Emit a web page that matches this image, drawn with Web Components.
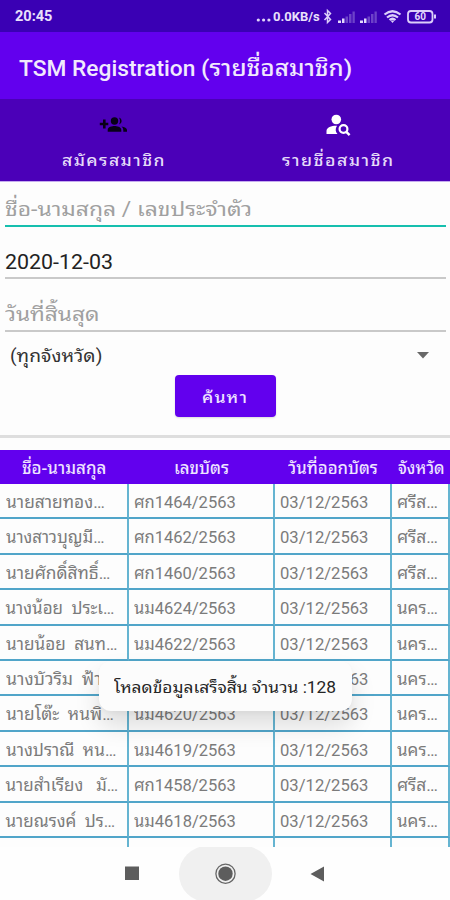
<!DOCTYPE html>
<html lang="th"><head><meta charset="utf-8"><title>TSM Registration</title>
<style>
html,body{margin:0;width:450px;height:900px;overflow:hidden;background:#fdfdfd}
body{font-family:Roboto,"Noto Sans Thai Looped","Noto Looped Thai","Droid Sans Thai",Loma,Waree,Garuda,"Noto Sans Thai","Noto Sans",sans-serif}
</style></head><body>
<reg-app></reg-app>
<script>
const define=(name,html,setup)=>customElements.define(name,class extends HTMLElement{
  connectedCallback(){
    if(this.shadowRoot)return;
    const t=document.createElement('template');
    t.innerHTML=typeof html==='function'?html(this):html;
    this.attachShadow({mode:'open'}).append(t.content.cloneNode(true));
    if(setup)setup(this);
  }
});

// One line of text condensed or widened to the width given in "w".
define('fit-text','<style>:host{display:block;white-space:pre}span{display:inline-block;transform-origin:0 50%}</style><span><slot></slot></span>',el=>{
  const s=el.shadowRoot.querySelector('span'),w=+el.getAttribute('w');
  el.style.width=w+'px';
  const n=s.offsetWidth;
  if(n)s.style.transform=`scaleX(${w/n})`;
});

define('status-bar',`<style>
:host{display:flex;align-items:center;height:32px;box-sizing:border-box;padding:2px 14px 0 15px;background:#3a00b4;color:#e9e0fb;font-weight:700;font-size:14.5px;line-height:18px}
.r{margin-left:auto;display:flex;align-items:center}svg{display:block}
.rate{font-size:13px;font-weight:700}
</style><fit-text w="37">20:45</fit-text><div class="r"><svg width="17" height="14"><g fill="#e0d4fa"><circle cx="2.300" cy="10" r="1.600"/><circle cx="7.600" cy="10" r="1.600"/><circle cx="12.900" cy="10" r="1.600"/></g></svg><fit-text class="rate" w="47">0.0KB/s</fit-text>
<svg width="116" height="18" viewBox="320 8 116 18" fill="none" stroke="#dccffa">
<path d="M324.500 13l6 6.500-3 3V10.500l3 3-6 6.500" stroke-width="1.500"/>
<g stroke="none" fill="#e3d9fb"><path d="M338 20.500h3v2.500h-3zM342 18.500h2.500v4.500H342z"/><path d="M360 20.500h3v2.500h-3zM364 18.500h2.500v4.500H364z"/><g opacity=".3"><path d="M345.500 16.500h2.500v6.500h-2.500zM349 14h2.500v9H349zM352.500 11.500h2.300v11.500h-2.300z"/><path d="M367.500 16.500h2.500v6.500h-2.500zM371 14h2.500v9H371zM374.500 11.500h2.300v11.500h-2.300z"/></g></g>
<path d="M384.500 14.500q8-6.500 16 0M387 17.500q5.500-4.500 11 0M389.500 20q3-2.500 6 0" stroke-width="2.200"/><path d="M390.500 20.500h4l-2 2.500z" fill="#dccffa" stroke="none"/>
<rect x="408" y="11" width="24.500" height="11.500" rx="3" stroke-width="1.800"/><path d="M435 14.500v4" stroke-width="2"/>
<text x="414.500" y="20.300" font-family="Roboto" font-size="10" font-weight="700" fill="#e3d9fb" stroke="none">60</text></svg></div>`);

define('app-title',`<style>:host{display:block;box-sizing:border-box;height:67px;padding:20px 19px;background:#6200ee;color:#f1e9fd;font-weight:500;font-size:22.5px;line-height:32px}div{display:flex}</style>
<div><fit-text w="182">TSM Registration </fit-text><fit-text w="151">(รายชื่อสมาชิก)</fit-text></div>`);

define('tab-item',`<style>:host{flex:1;display:flex;flex-direction:column;align-items:center;color:#e6dcf8;font-size:16px;font-weight:500;line-height:24px;letter-spacing:1.300px}::slotted(svg){display:block;margin:11px 0 9px}::slotted(fit-text){margin-left:2px}</style><slot name="icon"></slot><slot></slot>`);

define('tab-bar',`<style>:host{display:flex;height:83px;background:linear-gradient(#4b00b8 0 82px,#c5abef 82px)}</style>
<tab-item><svg slot="icon" width="30" height="30" viewBox="-1 0 30 30"><g fill="#080018"><path d="M4 9.500h2.600v3.200H9.300v2.600H6.600v3.200H4v-3.200H.8v-2.600H4z"/><circle cx="15.500" cy="11" r="3.700"/><path d="M8.700 21.800v-1.900c0-2.800 4.500-3.800 6.800-3.800s6.800 1 6.800 3.800v1.900zM20 7.500a3.700 3.700 0 0 1 0 7.100q2-3.600 0-7.100zM22.500 16.500c3 .5 5.500 1.500 5.500 3.400v1.900h-3.700v-1.900q0-2-1.800-3.400z"/></g></svg><fit-text w="104">สมัครสมาชิก</fit-text></tab-item>
<tab-item><svg slot="icon" width="30" height="30" viewBox="0 0 30 30"><g fill="#fff"><circle cx="13.300" cy="9.500" r="4.800"/><path d="M3.500 24v-3c0-4 5.500-5.500 10.500-5.300-2 3-1.600 6 .5 8.300z"/></g><circle cx="20.500" cy="19" r="3.900" fill="none" stroke="#fff" stroke-width="2.200"/><path d="M23.300 21.800l3.300 3.300" stroke="#fff" stroke-width="2.400"/></svg><fit-text w="113">รายชื่อสมาชิก</fit-text></tab-item>`);

define('line-field',`<style>:host{display:block;box-sizing:border-box;margin:0 4px 0 5px;font-size:20px;line-height:30px;color:#222;border-bottom:2px solid #c9c9c9}:host([hint]){color:#a0a0a0}:host([focused]){border-color:#16bfae}</style><slot></slot>`);

define('select-field',`<style>:host{display:flex;align-items:center;height:42px;box-sizing:border-box;padding:5px 21px 0 10px;font-size:18px;line-height:28px;color:#333}svg{margin-left:auto}</style><slot></slot><svg width="12" height="7"><path d="M0 0h12L6 6.500z" fill="#686868"/></svg>`);

define('search-button',`<style>:host{display:flex;align-items:center;justify-content:center;width:101px;height:42px;box-sizing:border-box;margin:0 auto;border-radius:4px;background:#6200ee;color:#eee4ff;font-size:16px;font-weight:500;letter-spacing:1px;box-shadow:0 1px 2px #0002}</style><slot></slot>`);

const rows=[["นายสายทอง…",99,"ศก1464/2563","ศรีส…"],["นางสาวบุญมี…",99,"ศก1462/2563","ศรีส…"],["นายศักดิ์สิทธิ์…",104,"ศก1460/2563","ศรีส…"],["นางน้อย  ประเ…",109,"นม4624/2563","นคร…"],["นายน้อย  สนท…",111,"นม4622/2563","นคร…"],["นางบัวริม  ฟ้า…",107,"นม4621/2563","นคร…"],["นายโต๊ะ  หนพิ…",108,"นม4620/2563","นคร…"],["นางปราณี  หน…",110,"นม4619/2563","นคร…"],["นายสำเรียง   มั…",113,"ศก1458/2563","ศรีส…"],["นายณรงค์  ปร…",110,"นม4618/2563","นคร…"]];

define('table-row',`<style>:host{display:grid;grid-template-columns:128.500px 146px 117px 58.500px;height:35.400px;font-size:17px;line-height:37px;color:#7b7b7b}
::slotted(*){box-sizing:border-box;padding-left:5.500px;border-right:2px solid #65b4d1;border-bottom:2px solid #51a5c9;overflow:hidden}
:host([head]){height:34px;background:#6200ee;color:#eee4ff;font-weight:500;font-size:16.500px;line-height:37px}
:host([head]) ::slotted(*){border:0;padding:0}</style><slot></slot>`);

define('member-table',()=>`<style>:host{display:block;height:397px;overflow:hidden;background:#fdfdfd}.h1{margin-left:22px}.h2{margin-left:45px}.h3{margin-left:13px}.h4{margin-left:6px}</style>
<table-row head><div><fit-text class="h1" w="84">ชื่อ-นามสกุล</fit-text></div><div><fit-text class="h2" w="55">เลขบัตร</fit-text></div><div><fit-text class="h3" w="90">วันที่ออกบัตร</fit-text></div><div><fit-text class="h4" w="47">จังหวัด</fit-text></div></table-row>
${rows.map(r=>`<table-row><div><fit-text w="${r[1]}">${r[0]}</fit-text></div><div><fit-text w="102">${r[2]}</fit-text></div><div><fit-text w="88">03/12/2563</fit-text></div><div><fit-text w="41">${r[3]}</fit-text></div></table-row>`).join('')}<table-row><div></div><div></div><div></div><div></div></table-row>`);

define('toast-message',`<style>:host{position:absolute;left:99px;top:661px;width:253px;height:50px;box-sizing:border-box;padding:12px 15px;border-radius:12px;background:#fcfcfc;box-shadow:0 14px 24px #0002,0 2px 4px #00000008;color:#252525;font-size:16.500px;line-height:30px}</style><slot></slot>`);

define('nav-bar',`<style>:host{display:flex;justify-content:center;height:53px;background:#fefefe}svg{display:block}</style>
<svg width="450" height="53"><rect x="179" y="-1" width="93" height="56" rx="28" fill="#f0f0f0"/><g fill="#5d5d5d"><path d="M125 19.500h14v13.500h-14zM324 19.500v15l-13.500-7.500z"/><circle cx="225.500" cy="26.700" r="7.200"/></g><circle cx="225.500" cy="26.700" r="9.600" fill="none" stroke="#666" stroke-width="1.300"/></svg>`);

define('reg-app',`<style>:host{display:flex;flex-direction:column;position:relative;width:450px;height:900px}
form{display:flex;flex-direction:column;height:253px}line-field:nth-of-type(1){height:45px;padding-top:12px}line-field:nth-of-type(2){height:52px;padding-top:20px}line-field:nth-of-type(3){height:53px;padding-top:20px}search-button{margin-top:1px}
.rule{height:3px;margin-bottom:12px;background:#dedede}</style>
<status-bar></status-bar><app-title></app-title><tab-bar></tab-bar>
<form><line-field hint focused><fit-text w="247">ชื่อ-นามสกุล / เลขประจำตัว</fit-text></line-field><line-field><fit-text w="108">2020-12-03</fit-text></line-field><line-field hint><fit-text w="94">วันที่สิ้นสุด</fit-text></line-field>
<select-field><fit-text w="92">(ทุกจังหวัด)</fit-text></select-field><search-button><fit-text w="46">ค้นหา</fit-text></search-button></form>
<div class="rule"></div><member-table></member-table><nav-bar></nav-bar>
<toast-message><fit-text w="222">โหลดข้อมูลเสร็จสิ้น จำนวน :128</fit-text></toast-message>`);
</script></body></html>
